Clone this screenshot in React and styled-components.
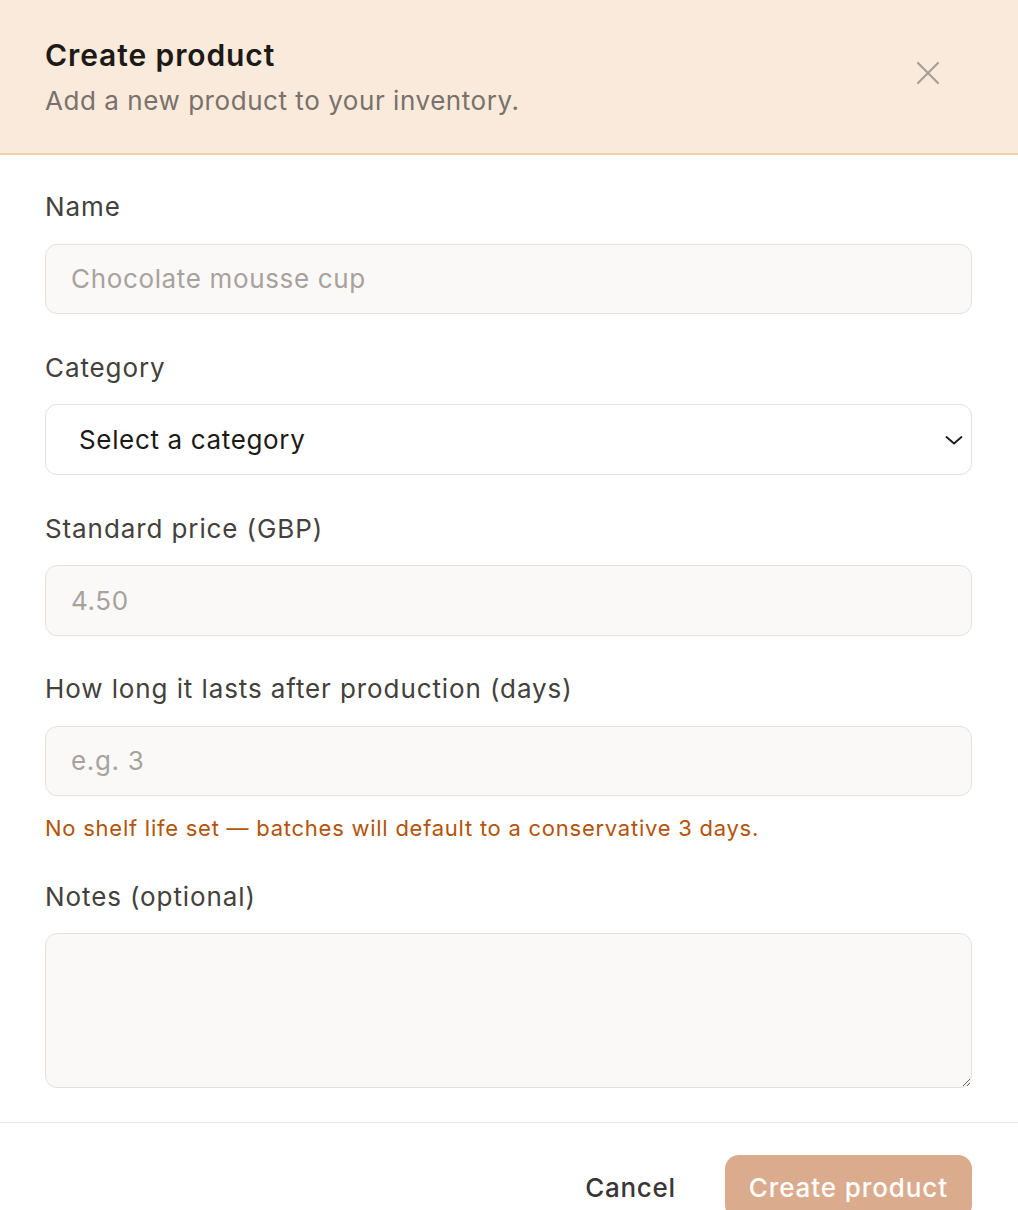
import React from "react";
import styled, { createGlobalStyle } from "styled-components";

const Global = createGlobalStyle`
  html, body { margin: 0; padding: 0; background: #ffffff; }
  body { font-family: Inter, "Noto Sans", "Liberation Sans", sans-serif; -webkit-font-smoothing: antialiased; }
  * { box-sizing: border-box; }
`;

const Dialog = styled.div`
  width: 1018px;
  background: #ffffff;
  display: flex;
  flex-direction: column;
`;

const Header = styled.header`
  display: flex;
  justify-content: space-between;
  align-items: flex-start;
  padding: 35px 45px 32px 45px;
  background: #faeadb;
  border-bottom: 2px solid #f5d1a8;
`;

const HeaderText = styled.div`
  display: flex;
  flex-direction: column;
  gap: 6px;
`;

const Title = styled.h2`
  margin: 0;
  font-size: 30px;
  line-height: 40px;
  font-weight: 600;
  color: #1c1917;
  letter-spacing: 0.9px;
`;

const Description = styled.p`
  margin: 0;
  font-size: 26px;
  line-height: 40px;
  color: #78716c;
  letter-spacing: 0.55px;
`;

const CloseButton = styled.button`
  border: 0;
  background: transparent;
  padding: 0;
  margin: 26px 33px 0 0;
  width: 24px;
  height: 24px;
  display: flex;
  align-items: center;
  justify-content: center;
  color: #a3a09c;
  cursor: pointer;
`;

const Body = styled.div`
  display: flex;
  flex-direction: column;
  gap: 35.5px;
  padding: 34px 46px 34px 45px;
`;

const Field = styled.div`
  display: flex;
  flex-direction: column;
`;

const Label = styled.label`
  font-size: 26px;
  line-height: 36px;
  color: #44403c;
  margin-bottom: 18.5px;
  letter-spacing: 0.9px;
`;

const fieldBase = `
  width: 100%;
  border: 1px solid #e4e1dd;
  border-radius: 12px;
  font-family: Inter, "Noto Sans", "Liberation Sans", sans-serif;
  font-size: 26px;
  letter-spacing: 0.65px;
  color: #1c1917;
  outline: none;
`;

const TextInput = styled.input`
  ${fieldBase}
  height: 70.5px;
  padding: 0 25px;
  background: #faf9f7;
  &::placeholder { color: #a8a29e; }
`;

const SelectBox = styled.div`
  ${fieldBase}
  height: 71px;
  padding: 0 8px 0 33px;
  background: #ffffff;
  display: flex;
  align-items: center;
  justify-content: space-between;
`;

const SelectValue = styled.span`
  color: #1c1917;
  font-size: 26px;
`;

const Chevron = styled.svg`
  width: 18px;
  height: 18px;
  color: #1c1917;
`;

const Hint = styled.p`
  margin: 17px 0 0 0;
  font-size: 22px;
  line-height: 30px;
  color: #b45309;
  letter-spacing: 0.75px;
`;

const TextArea = styled.textarea`
  ${fieldBase}
  height: 155px;
  padding: 20px 25px;
  background: #faf9f7;
  resize: vertical;
`;

const Footer = styled.footer`
  display: flex;
  justify-content: flex-end;
  align-items: flex-start;
  gap: 24px;
  padding: 32px 46px 0 45px;
  border-top: 1px solid #e7e5e4;
  height: 100px;
`;

const Button = styled.button`
  height: 64px;
  border: 0;
  border-radius: 14px;
  padding: 0 ${(p) => (p.$primary ? "24px" : "25px")};
  font-family: Inter, "Noto Sans", "Liberation Sans", sans-serif;
  font-size: 26px;
  font-weight: 500;
  letter-spacing: ${(p) => (p.$primary ? "0.9px" : "0.7px")};
  background: ${(p) => (p.$primary ? "#dbab8d" : "transparent")};
  color: ${(p) => (p.$primary ? "#ffffff" : "#3a3633")};
  cursor: pointer;
`;

export default function App() {
  return (
    <>
      <Global />
      <Dialog>
        <Header>
          <HeaderText>
            <Title>Create product</Title>
            <Description>Add a new product to your inventory.</Description>
          </HeaderText>
          <CloseButton aria-label="Close">
            <svg width="24" height="24" viewBox="0 0 24 24" fill="none" stroke="currentColor" strokeWidth="2.2" strokeLinecap="round">
              <path d="M2 2L22 22M22 2L2 22" />
            </svg>
          </CloseButton>
        </Header>
        <Body>
          <Field>
            <Label>Name</Label>
            <TextInput placeholder="Chocolate mousse cup" />
          </Field>
          <Field>
            <Label>Category</Label>
            <SelectBox>
              <SelectValue>Select a category</SelectValue>
              <Chevron viewBox="0 0 18 18" fill="none" stroke="currentColor" strokeWidth="1.8" strokeLinecap="round" strokeLinejoin="round">
                <path d="M1.5 6L9 12.5L16.5 6" />
              </Chevron>
            </SelectBox>
          </Field>
          <Field>
            <Label>Standard price (GBP)</Label>
            <TextInput placeholder="4.50" />
          </Field>
          <Field>
            <Label>How long it lasts after production (days)</Label>
            <TextInput placeholder="e.g. 3" />
            <Hint>No shelf life set — batches will default to a conservative 3 days.</Hint>
          </Field>
          <Field>
            <Label>Notes (optional)</Label>
            <TextArea />
          </Field>
        </Body>
        <Footer>
          <Button>Cancel</Button>
          <Button $primary>Create product</Button>
        </Footer>
      </Dialog>
    </>
  );
}
